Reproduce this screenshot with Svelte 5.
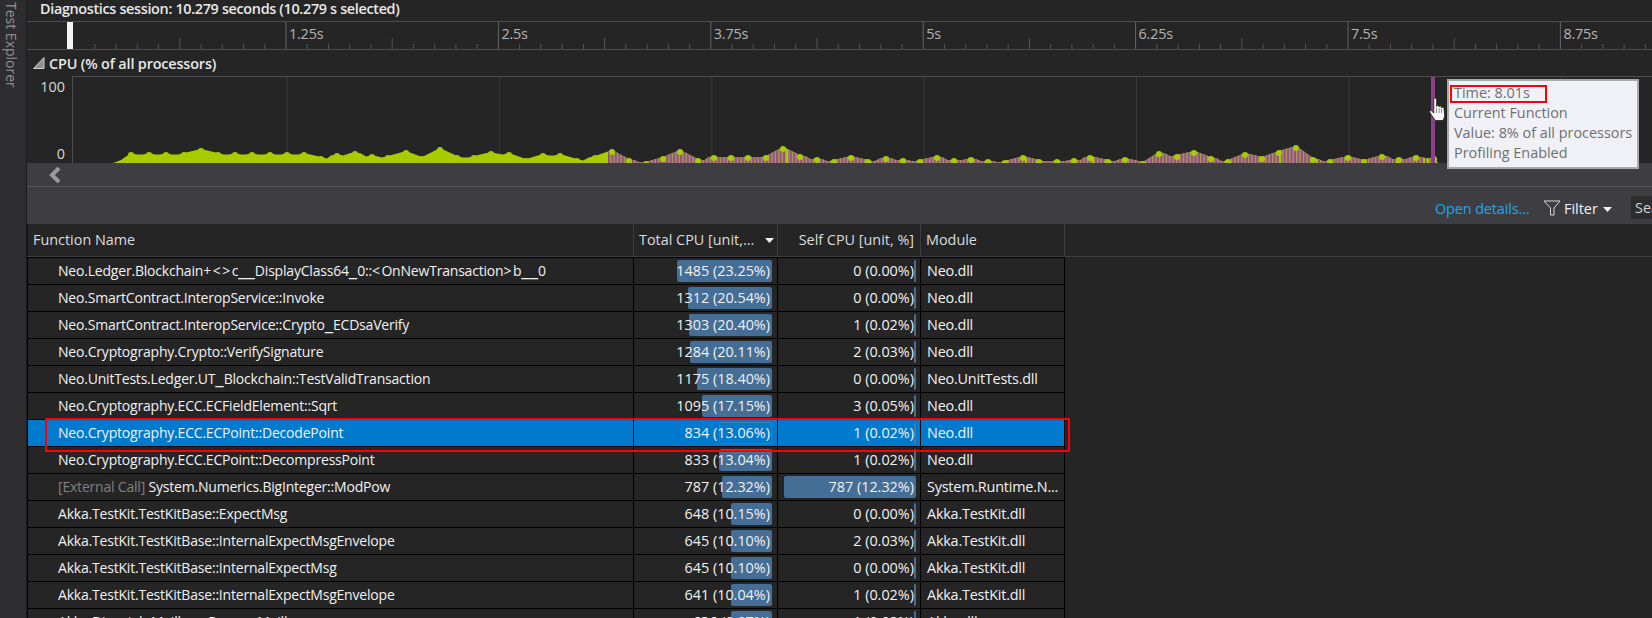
<script>
  const ticks = [];
  const X0 = 73.6, MAJ = 212.4;
  for (let i = 1; i < 84; i++) {
    const x = X0 + (MAJ / 10) * i;
    if (x > 1652) break;
    ticks.push({ x, cls: i % 10 === 0 ? 'M' : i % 5 === 0 ? 'm' : 's' });
  }
  const labels = ['1.25s', '2.5s', '3.75s', '5s', '6.25s', '7.5s', '8.75s'];
  const grid = labels.map((_, i) => X0 + MAJ * (i + 1));

  const CW = 1652 - 72, CH = 86;
  const ox = 72;
  const samples = [
    [130,10],[148,10],[165,10],[183,10],[200,14],[217,10],[234,10],[251,10],[269,10],[286,10],[303,10],[320,6],[336,9],[354,11],[371,8],[387,7],[405,12],[421,6],[439,15],[456,7],[473,7],[490,11],[508,10],[525,4],[542,9],[559,9],[576,4],[594,7],[611,13],[628,4],[645,1],[662,6],[679,13],[697,4],[713,7],[730,7],[747,7],[765,7],[782,16],[799,8],[816,5],[833,3],[850,7],[867,3],[885,6],[902,4],[919,3],[936,7],[953,4],[970,5],[987,3],[1004,2],[1022,7],[1038,3],[1056,3],[1073,4],[1089,7],[1107,3],[1124,5],[1142,1],[1158,11],[1176,8],[1193,12],[1210,6],[1227,3],[1244,10],[1261,6],[1278,12],[1295,17],[1312,5],[1329,3],[1347,7],[1363,3],[1381,8],[1398,5],[1415,7],[1433,6]
  ];
  const H = 86;
  const py = (h) => H - h;
  let pts = [`${112 - ox},${H}`, `${120 - ox},${H - 3}`];
  samples.forEach(([x, h], i) => {
    const prev = samples[i - 1], next = samples[i + 1];
    const s = Math.max(h - 1.5, 0.5);
    if (prev && Math.abs(prev[1] - h) <= 3) pts.push(`${x - 6 - ox},${py(s)}`);
    pts.push(`${x - ox},${py(h)}`);
    if (next && Math.abs(next[1] - h) <= 3) pts.push(`${x + 6 - ox},${py(s)}`);
  });
  pts.push(`${1437 - ox},${H}`);
  const area = pts.join(' ');
  const stripes = [];
  for (let x = 607; x < 1432; x += 3.43) stripes.push(x - ox);
  const greenBars = [785, 1005, 1024, 1091, 1278, 1315, 1395, 1422, 1426];

  const rows = [
    ['Neo.Ledger.Blockchain+<>c__DisplayClass64_0::<OnNewTransaction>b__0', 1485, 23.25, 0, 0, 'Neo.dll'],
    ['Neo.SmartContract.InteropService::Invoke', 1312, 20.54, 0, 0, 'Neo.dll'],
    ['Neo.SmartContract.InteropService::Crypto_ECDsaVerify', 1303, 20.4, 1, 0.02, 'Neo.dll'],
    ['Neo.Cryptography.Crypto::VerifySignature', 1284, 20.11, 2, 0.03, 'Neo.dll'],
    ['Neo.UnitTests.Ledger.UT_Blockchain::TestValidTransaction', 1175, 18.4, 0, 0, 'Neo.UnitTests.dll'],
    ['Neo.Cryptography.ECC.ECFieldElement::Sqrt', 1095, 17.15, 3, 0.05, 'Neo.dll'],
    ['Neo.Cryptography.ECC.ECPoint::DecodePoint', 834, 13.06, 1, 0.02, 'Neo.dll'],
    ['Neo.Cryptography.ECC.ECPoint::DecompressPoint', 833, 13.04, 1, 0.02, 'Neo.dll'],
    ['System.Numerics.BigInteger::ModPow', 787, 12.32, 787, 12.32, 'System.Runtime.N...', true],
    ['Akka.TestKit.TestKitBase::ExpectMsg', 648, 10.15, 0, 0, 'Akka.TestKit.dll'],
    ['Akka.TestKit.TestKitBase::InternalExpectMsgEnvelope', 645, 10.1, 2, 0.03, 'Akka.TestKit.dll'],
    ['Akka.TestKit.TestKitBase::InternalExpectMsg', 645, 10.1, 0, 0, 'Akka.TestKit.dll'],
    ['Akka.TestKit.TestKitBase::InternalExpectMsgEnvelope', 641, 10.04, 1, 0.02, 'Akka.TestKit.dll'],
    ['Akka.Dispatch.Mailbox::ProcessMailbox', 636, 9.97, 1, 0.02, 'Akka.dll']
  ];
  const fmt = (n, p) => `${n} (${p.toFixed(2)}%)`;
  const parts = (s) => s.split(/(_+|[<>+]+)/).filter(Boolean);
  const symClass = (p) => (p[0] === '_' ? 'us' : /^[<>+]/.test(p) ? 'ang' : '');
</script>

<div class="app">
  <aside class="rail"><span class="rail-text">Test Explorer</span></aside>
  <main class="main">
    <header class="session">Diagnostics session: 10.279 seconds (10.279 s selected)</header>
    <div class="ruler">
      <div class="handle"></div>
      <svg class="ruler-svg" width="1625" height="27" aria-hidden="true">
        {#each ticks as t}
          <line x1={t.x - 27} x2={t.x - 27} y1={t.cls === 'M' ? 0 : t.cls === 'm' ? 16 : 22} y2="27" class={t.cls === 'M' ? 'tick-major' : 'tick'} />
        {/each}
      </svg>
      {#each labels as l, i}
        <span class="rlabel" style="left:{grid[i] - 27 + 3}px">{l}</span>
      {/each}
    </div>
    <div class="cpu-head">
      <svg class="tri" width="12" height="12" viewBox="0 0 12 12" aria-hidden="true"><path d="M11 0.500V11.500H0.500Z" fill="#8f8f8f" stroke="#cfcfcf" stroke-width="1"/></svg>
      <span>CPU (% of all processors)</span>
    </div>
    <div class="chart-row">
      <div class="axis"><span>100</span><span>0</span></div>
      <div class="chart">
        <svg width={CW} height={CH} aria-hidden="true">
          <defs>
            <clipPath id="areaClip"><polygon points={area} /></clipPath>
          </defs>
          {#each grid as g}
            <line x1={g - ox} x2={g - ox} y1="0" y2={H} class="gridline" />
          {/each}
          <polygon points={area} fill="#a8cc00" />
          <g clip-path="url(#areaClip)">
            <rect x={607 - ox} y="0" width={1432 - 607} height={H} fill="#a39a52" />
            {#each stripes as s}
              <rect x={s} y="0" width="2" height={H} fill="#95508a" />
            {/each}
            {#each greenBars as g}
              <rect x={g - ox} y="0" width="2" height={H} fill="#a8cc00" />
            {/each}
          </g>
          {#each samples as [x, h]}
            <circle cx={x - ox} cy={py(h) + 2} r="3" fill="#a8cc00" />
          {/each}
          <rect x={1430 - ox} y="0" width="4" height={H} fill="#8c3f8c" />
        </svg>
        <svg class="hand" width="17" height="24" viewBox="0 0 17 24" aria-hidden="true">
          <path d="M4.800 1.500c0-1.600 2.800-1.600 2.800 0V8.500c.2-1.500 2.300-1.500 2.500 0v.5c.2-1.300 2.200-1.300 2.400 0v1c.2-1.100 2.200-1.100 2.400.2L15.600 17c0 2.500-.8 4-2 5.500H6.500C5 20.500 3 18 .8 14.200c-.7-1.300 1-2.500 2-1.200l2 2.300Z" fill="#fff" stroke="#222" stroke-width=".8"/>
          <path d="M7.600 10v5M10.100 10v5M12.500 11v4" stroke="#555" stroke-width=".7" fill="none"/>
        </svg>
        <div class="tooltip">
          <div>Time: 8.01s</div>
          <div>Current Function</div>
          <div>Value: 8% of all processors</div>
          <div>Profiling Enabled</div>
          <div class="tip-mark"></div>
        </div>
      </div>
    </div>
    <div class="scroll">
      <svg width="14" height="16" viewBox="0 0 14 16" aria-hidden="true"><path d="M11 1L4 8l7 7" fill="none" stroke="#9a9a9a" stroke-width="4"/></svg>
    </div>
    <div class="toolbar">
      <span class="link">Open details...</span>
      <svg class="funnel" width="18" height="16" viewBox="0 0 18 16" aria-hidden="true"><path d="M1 1H17L11 8V15H7.500V8Z" fill="none" stroke="#d8d8d8" stroke-width="1"/></svg>
      <span class="filter">Filter</span>
      <svg class="caret" width="9" height="5" viewBox="0 0 9 5" aria-hidden="true"><path d="M0 0H9L4.500 5Z" fill="#f1f1f1"/></svg>
      <div class="search">Search</div>
    </div>
    <div class="table">
      <div class="thead">
        <div class="th name">Function Name</div>
        <div class="th total">Total CPU [unit,...
          <svg class="sort" width="9" height="5" viewBox="0 0 9 5" aria-hidden="true"><path d="M0 0H9L4.500 5Z" fill="#f1f1f1"/></svg>
        </div>
        <div class="th self">Self CPU [unit, %]</div>
        <div class="th mod">Module</div>
      </div>
      <div class="tbody">
        {#each rows as r, i}
          <div class="row" class:sel={i === 6}>
            <div class="td name">{#if r[6]}<span class="ext">[External Call]&nbsp;</span>{/if}{#each parts(r[0]) as p}{#if symClass(p)}<span class={symClass(p)}>{p}</span>{:else}{p}{/if}{/each}</div>
            <div class="td num">
              <span class="bar" style="width:{r[2] * 4.09}px"></span>
              <span class="val">{fmt(r[1], r[2])}</span>
            </div>
            <div class="td num self-cell">
              <span class="bar" style="width:{Math.max(2, r[4] * 10.72)}px"></span>
              <span class="val">{fmt(r[3], r[4])}</span>
            </div>
            <div class="td mod">{r[5]}</div>
          </div>
        {/each}
      </div>
      <div class="sel-mark"></div>
    </div>
  </main>
</div>

<style>
  :global(body) { margin: 0; background: #252526; }
  .app {
    display: flex; width: 1652px; height: 618px; overflow: hidden;
    font-family: "Open Sans", "Noto Sans", sans-serif; font-size: 14.4px; color: #f1f1f1;
    background: #252526;
  }
  .rail { width: 26px; flex: none; background: #2d2d30; border-right: 1px solid #1c1c1c; position: relative; }
  .rail-text {
    position: absolute; left: 2px; top: 2px; writing-mode: vertical-rl;
    color: #919191; font-size: 14px; line-height: 18px;
  }
  .main { flex: 1; min-width: 0; display: flex; flex-direction: column; }
  .main > * { flex: none; }
  .session { height: 21px; line-height: 17px; padding-left: 13px; font-size: 14.4px; font-weight: 600; letter-spacing: -0.33px; color: #e8e8e8; border-bottom: 1px solid #4d4d50; }
  .ruler { height: 27px; position: relative; border-bottom: 1px solid #4d4d50; }
  .ruler-svg { display: block; }
  .tick { stroke: #55555a; stroke-width: 1; }
  .tick-major { stroke: #66666a; stroke-width: 1; }
  .handle { position: absolute; left: 40px; top: 0; width: 6px; height: 27px; background: #f5f5f5; }
  .rlabel { position: absolute; top: 2px; font-size: 14.4px; color: #b4b4b4; line-height: 20px; letter-spacing: -0.2px; }
  .cpu-head { height: 26px; display: flex; align-items: center; padding-left: 6px; gap: 4px; font-size: 14.4px; font-weight: 600; letter-spacing: -0.15px; color: #e8e8e8; }
  .tri { flex: none; }
  .chart-row { display: flex; height: 87px; }
  .axis { width: 45px; flex: none; display: flex; flex-direction: column; justify-content: space-between; align-items: flex-end; padding: 2px 7px 0 0; box-sizing: border-box; font-size: 14.4px; color: #d8d8d8; line-height: 18px; }
  .chart { flex: 1; position: relative; border-top: 1px solid #4d4d50; border-left: 1px solid #4d4d50; }
  .chart svg:first-child { display: block; }
  .gridline { stroke: #3a3a3a; stroke-width: 1; }
  .hand { position: absolute; left: 1356px; top: 21px; }
  .tooltip {
    position: absolute; left: 1374px; top: 2px; box-sizing: content-box;
    background: #f0f1f7; border: 2px solid #a9a9a9; padding: 2px 0 0 5px; width: 183px; height: 84px; z-index: 2;
    color: #6f6f6f; font-size: 14.4px; line-height: 20px;
  }
  .tip-mark { position: absolute; left: 1px; top: 4px; width: 93px; height: 14px; border: 2px solid #f00; }
  .scroll { height: 23px; background: #3e3e42; border-bottom: 1px solid #55555a; display: flex; align-items: center; padding-left: 21px; }
  .toolbar { height: 37px; background: #3e3e42; position: relative; }
  .link { position: absolute; left: 1408px; top: 12px; color: #1ea6ee; font-size: 14.4px; line-height: 20px; letter-spacing: -0.1px; }
  .funnel { position: absolute; left: 1516px; top: 13px; }
  .filter { position: absolute; left: 1537px; top: 12px; font-size: 14.4px; line-height: 20px; color: #f1f1f1; }
  .caret { position: absolute; left: 1576px; top: 20px; }
  .search { position: absolute; left: 1604px; top: 9px; width: 44px; height: 23px; background: #2d2d30; color: #d0d0d0; line-height: 23px; padding-left: 4px; font-size: 14.4px; overflow: hidden; }
  .table { flex: 1 1 0 !important; min-height: 0; overflow: hidden; position: relative; background: #252526; }
  .thead { display: flex; height: 32px; border-bottom: 1px solid #3e3e42; }
  .th { box-sizing: border-box; line-height: 31px; color: #dcdcdc; font-size: 14.4px; border-right: 1px solid #3e3e42; position: relative; white-space: nowrap; }
  .th.name { width: 607px; padding-left: 5px; border-left: 1px solid #111; }
  .th.total { width: 144px; padding-left: 5px; }
  .th.self { width: 143px; text-align: right; padding-right: 6px; }
  .th.mod { width: 144px; padding-left: 5px; }
  .sort { position: absolute; left: 131px; top: 14px; }
  .tbody { border-top: 1px solid #000; width: 1038px; }
  .row { display: flex; height: 27px; box-sizing: border-box; border-bottom: 1px solid #000; }
  .row.sel { background: #007acc; }
  .td { box-sizing: border-box; border-right: 1px solid #000; line-height: 25px; white-space: nowrap; overflow: hidden; position: relative; font-size: 14.4px; color: #f1f1f1; }
  .td.name { width: 607px; padding-left: 30px; border-left: 1px solid #000; font-size: 14px; letter-spacing: -0.2px; }
  .ang { letter-spacing: 1.5px; }
  .us { font-size: 19px; line-height: 14px; letter-spacing: 0; }
  .ext { color: #808080; }
  .td.num { width: 144px; text-align: right; padding-right: 7px; }
  .td.self-cell { width: 143px; padding-right: 6px; }
  .td.mod { width: 144px; padding-left: 6px; letter-spacing: -0.2px; }
  .bar { position: absolute; right: 5px; top: 2px; height: 22px; background: #446e95; border-radius: 2px; }
  .self-cell .bar { right: 4px; }
  .sel .bar { background: transparent; box-shadow: inset 0 0 0 1px #3f7cae; }
  .val { position: relative; }
  .sel-mark { position: absolute; left: 18px; top: 194px; width: 1021px; height: 30px; border: 2px solid #f00; pointer-events: none; }
</style>
